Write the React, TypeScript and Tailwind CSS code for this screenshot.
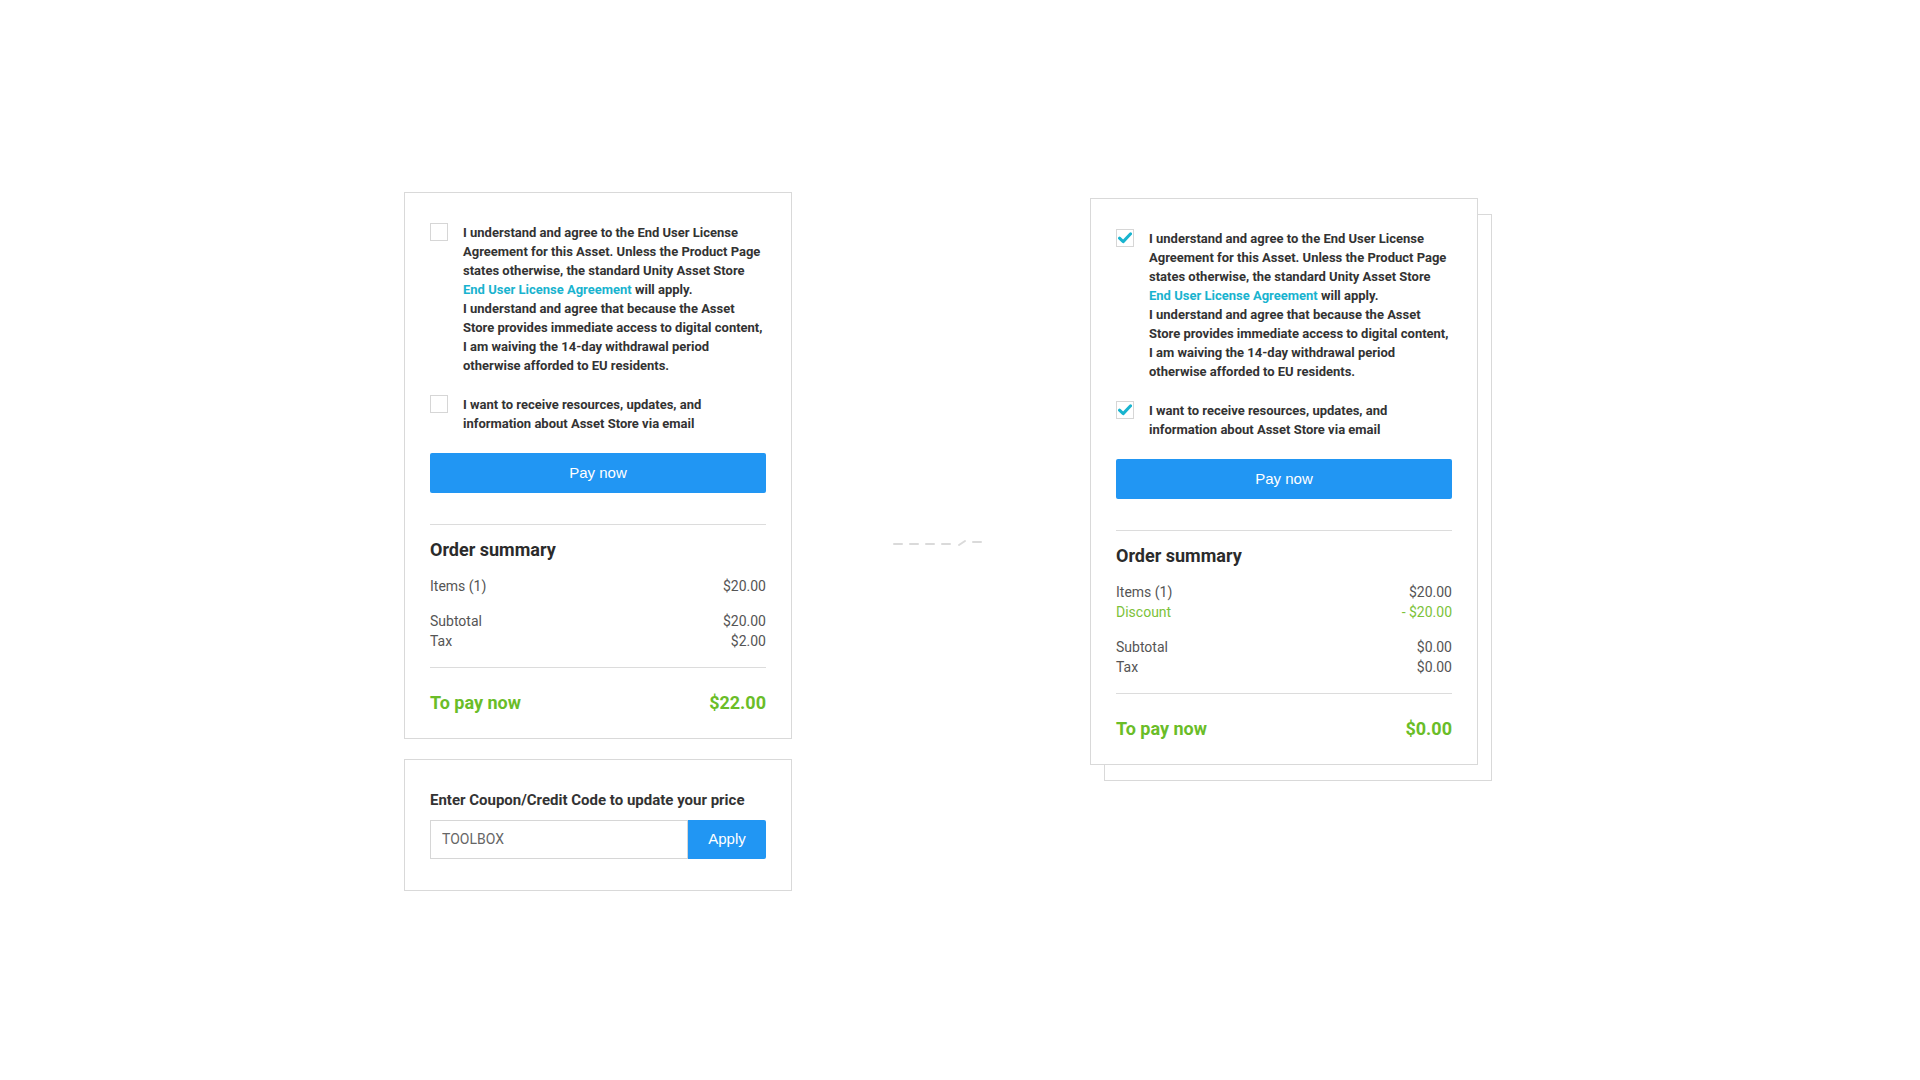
import React from "react";

const body = "font-['Roboto',sans-serif]";

function Check({ on }: { on: boolean }) {
  return (
    <div className="flex h-[18px] w-[18px] shrink-0 items-center justify-center border border-[#d6d6d6] bg-white">
      {on && (
        <svg width="14" height="12" viewBox="0 0 14 12">
          <path d="M1.5 6.2 L5.2 9.6 L12.6 1.8" fill="none" stroke="#18b4cf" strokeWidth="3" strokeLinecap="round" strokeLinejoin="round" />
        </svg>
      )}
    </div>
  );
}

function Terms({ on }: { on: boolean }) {
  return (
    <>
      <div className="flex gap-[15px]">
        <Check on={on} />
        <p className="text-[13px] font-bold leading-[19px] text-[#333]">
          I understand and agree to the End User License Agreement for this Asset. Unless the Product Page states otherwise, the standard Unity Asset Store{" "}
          <span className="text-[#19b3cf]">End User License Agreement</span> will apply.
          <br />
          I understand and agree that because the Asset Store provides immediate access to digital content, I am waiving the 14-day withdrawal period otherwise afforded to EU residents.
        </p>
      </div>
      <div className="mt-[20px] flex gap-[15px]">
        <Check on={on} />
        <p className="text-[13px] font-bold leading-[19px] text-[#333]">
          I want to receive resources, updates, and information about Asset Store via email
        </p>
      </div>
      <button className="mt-[20px] h-[40px] w-full rounded-[2px] bg-[#2196f3] font-['Liberation_Sans',sans-serif] text-[15px] text-white">
        Pay now
      </button>
    </>
  );
}

function Row({ k, v, green }: { k: string; v: string; green?: boolean }) {
  return (
    <div className={`flex justify-between text-[14px] leading-[20px] ${green ? "text-[#7cc23a]" : "text-[#555]"}`}>
      <span>{k}</span>
      <span>{v}</span>
    </div>
  );
}

function Summary({ discount }: { discount: boolean }) {
  return (
    <>
      <div className="mt-[31px] border-t border-[#dcdcdc] pt-[13px]">
        <div className="text-[18px] font-bold leading-[24px] text-[#2b2b2b]">Order summary</div>
        <div className="mt-[14px]">
          <Row k="Items (1)" v="$20.00" />
          {discount && <Row k="Discount" v="- $20.00" green />}
        </div>
        <div className="mt-[15px]">
          <Row k="Subtotal" v={discount ? "$0.00" : "$20.00"} />
          <Row k="Tax" v={discount ? "$0.00" : "$2.00"} />
        </div>
      </div>
      <div className="mt-[16px] flex justify-between border-t border-[#dcdcdc] pt-[23px] text-[18px] font-bold leading-[24px] text-[#6abd28]">
        <span>To pay now</span>
        <span>{discount ? "$0.00" : "$22.00"}</span>
      </div>
    </>
  );
}

function Card({ on }: { on: boolean }) {
  return (
    <div className="w-[388px] border border-[#d9d9d9] bg-white px-[25px] pt-[30px] pb-[23px]">
      <Terms on={on} />
      <Summary discount={on} />
    </div>
  );
}

export default function App() {
  return (
    <div className={`${body} flex h-[1080px] w-[1920px] items-start bg-white pl-[404px] pt-[192px]`}>
      <div className="flex w-[388px] flex-col gap-[20px]">
        <Card on={false} />
        <div className="border border-[#d9d9d9] bg-white px-[25px] pt-[31px] pb-[31px]">
          <div className="text-[15px] font-bold leading-[19px] text-[#333]">
            Enter Coupon/Credit Code to update your price
          </div>
          <div className="mt-[10px] flex h-[39px]">
            <input
              defaultValue="TOOLBOX"
              className="min-w-0 flex-1 border border-[#d6d6d6] px-[11px] text-[14px] text-[#666] outline-none"
            />
            <button className="w-[78px] rounded-r-[2px] bg-[#2196f3] font-['Liberation_Sans',sans-serif] text-[15px] text-white">
              Apply
            </button>
          </div>
        </div>
      </div>

      <div className="w-[298px] pl-[101px] pt-[345px]">
        <svg width="90" height="12" viewBox="0 0 90 12">
          <g stroke="#dadada" strokeWidth="2" strokeLinecap="round" fill="none">
            <path d="M1 7 H9" />
            <path d="M17 7 H25" />
            <path d="M33 7 H41" />
            <path d="M49 7 H57" />
            <path d="M66 8 L72 4" />
            <path d="M80 5 H88" />
          </g>
        </svg>
      </div>

      <div className="relative mt-[6px] w-[388px]">
        <div className="absolute inset-0 translate-x-[14px] translate-y-[16px] border border-[#d9d9d9] bg-white" />
        <div className="relative">
          <Card on={true} />
        </div>
      </div>
    </div>
  );
}
